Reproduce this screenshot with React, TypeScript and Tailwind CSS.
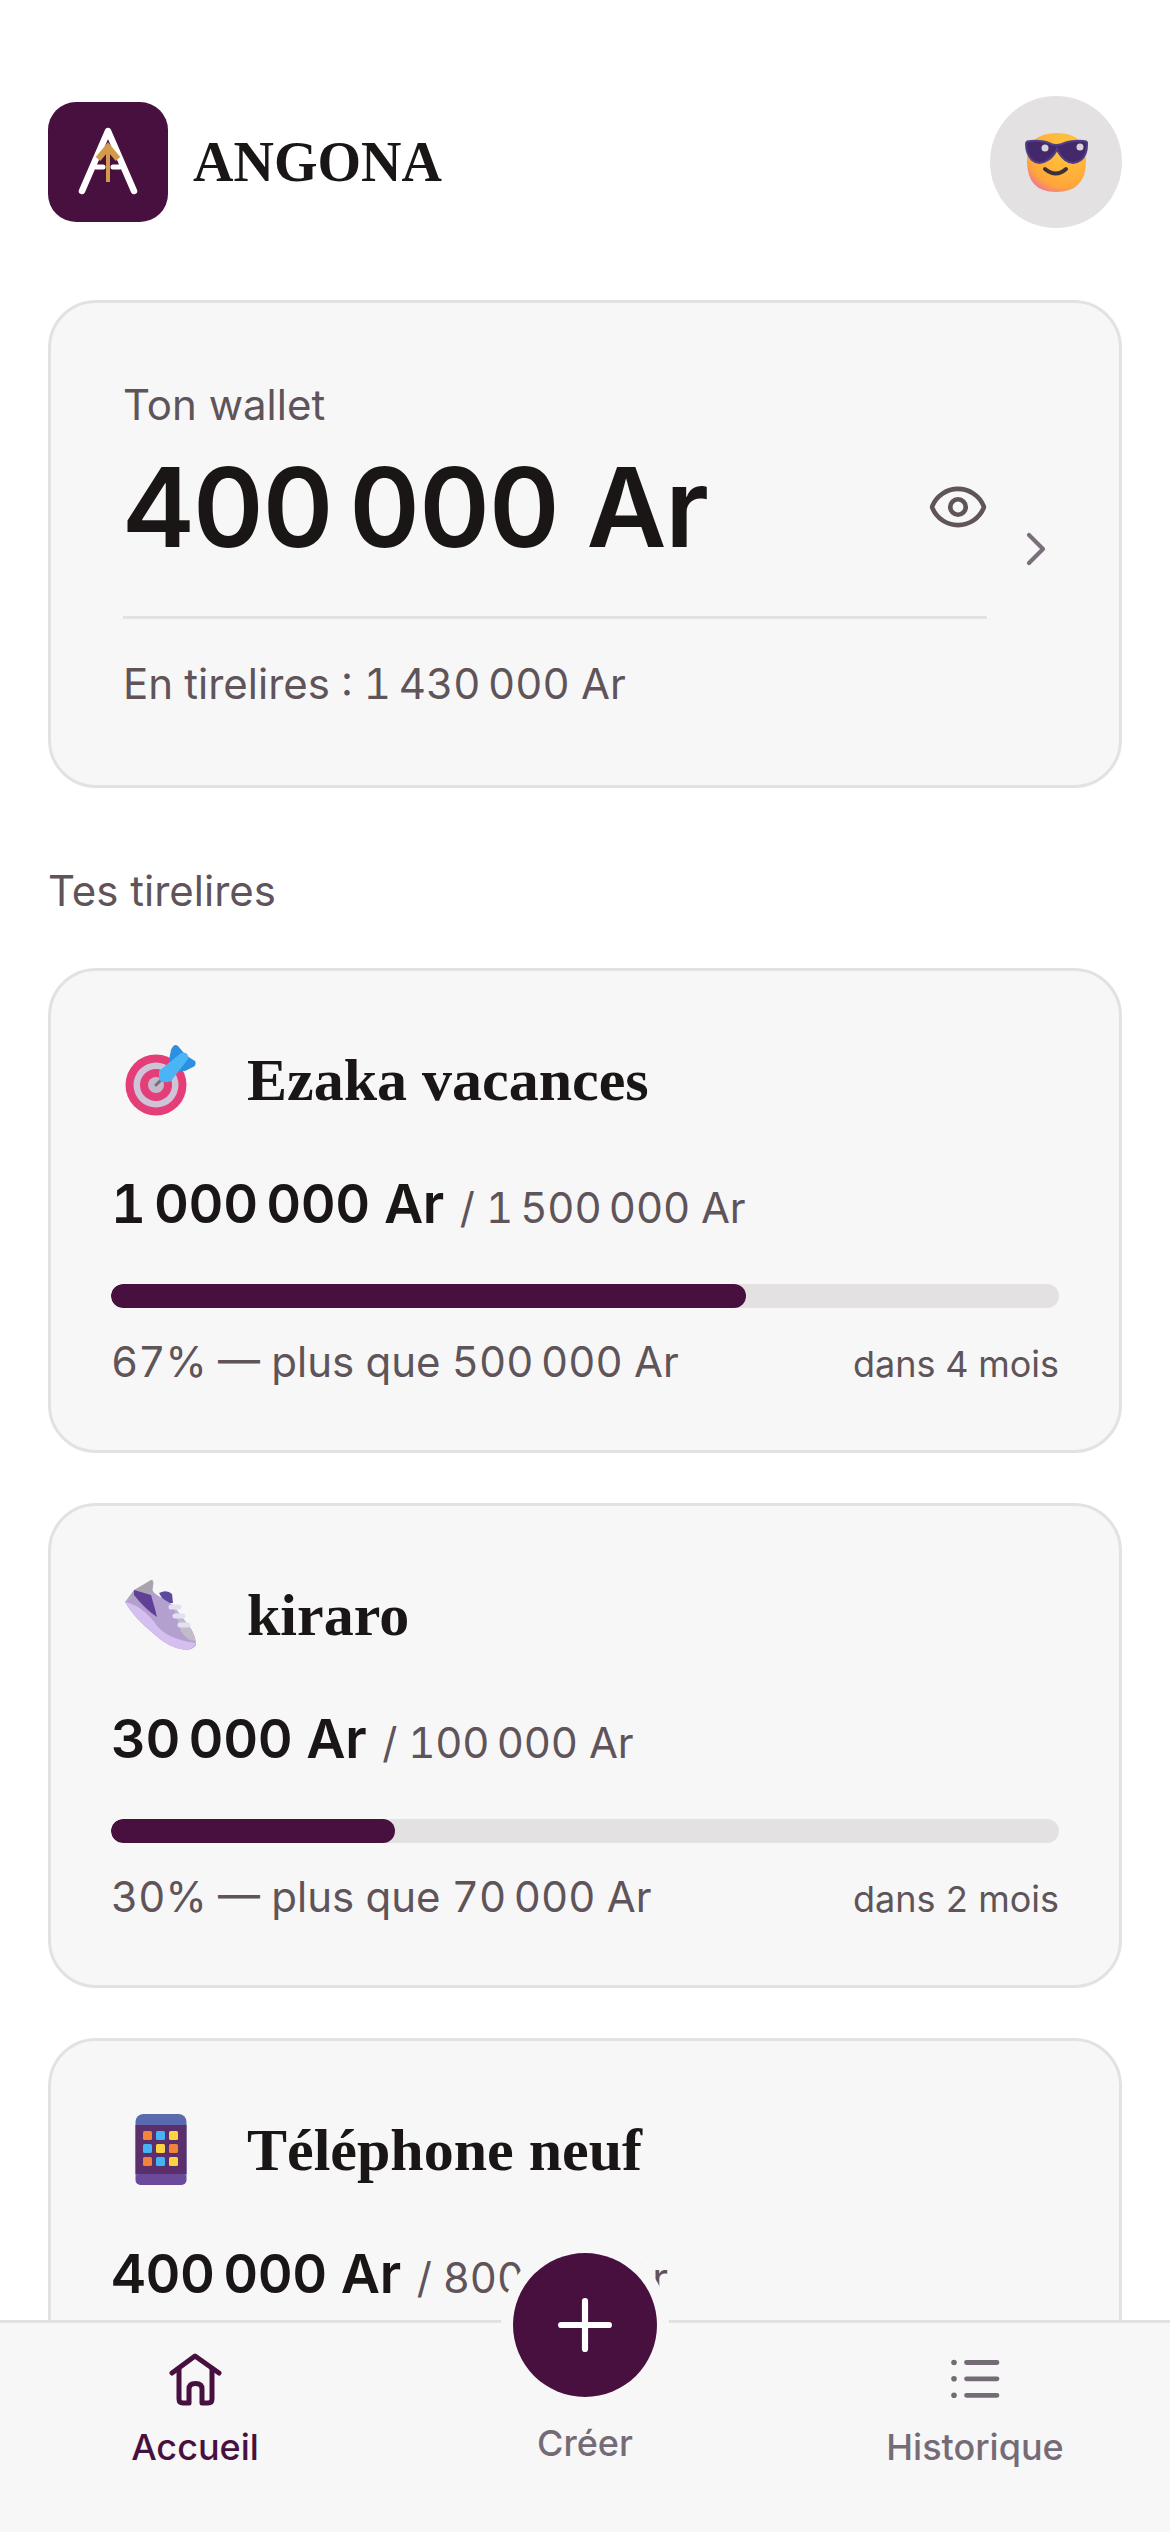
import { Plus, Eye, ChevronRight } from 'lucide-react';

const LogoMark = () => (
  <svg viewBox="0 0 120 120" className="w-[120px] h-[120px] shrink-0">
    <rect width="120" height="120" rx="28" fill="#48103f" />
    <path d="M34 89 L60 29 L86 89" fill="none" stroke="#fff" strokeWidth="6.5" strokeLinecap="round" strokeLinejoin="round" />
    <path d="M48 65 H55 M65 65 H72" stroke="#fff" strokeWidth="5" strokeLinecap="round" />
    <path d="M60 80 V46" stroke="#d39a4b" strokeWidth="4" />
    <path d="M50 57 L60 45 L70 57" fill="none" stroke="#d39a4b" strokeWidth="6" />
  </svg>
);

const CoolFace = () => (
  <svg viewBox="0 0 63 59" className="w-[63px] h-[59px]">
    <defs>
      <radialGradient id="face" cx="0.65" cy="0.25" r="0.85">
        <stop offset="0" stopColor="#ffc83d" />
        <stop offset="0.78" stopColor="#ffa63a" />
        <stop offset="1" stopColor="#ec6fa0" />
      </radialGradient>
    </defs>
    <path d="M2 28 Q2 0 32 0 Q61 0 61 28 Q61 59 31 59 Q2 59 2 28Z" fill="url(#face)" />
    <path d="M1 11 Q1 8 5 8 Q18 7 26 11 Q31 13 37 11 Q46 7 59 8 Q63 8 62 12 Q62 22 56 27 Q48 33 40 27 Q34 22 32 16 Q29 23 23 27 Q14 33 7 27 Q1 21 1 11Z" fill="#43296b" stroke="#4f3f85" strokeWidth="2" />
    <circle cx="20" cy="15" r="3.5" fill="#d8d2d8" />
    <circle cx="55" cy="14" r="3.5" fill="#d8d2d8" />
    <path d="M20 36 Q31 45 41 36" fill="none" stroke="#3a3238" strokeWidth="4" strokeLinecap="round" />
  </svg>
);

const TargetIcon = () => (
  <svg viewBox="0 0 72 72" className="w-[72px] h-[72px]">
    <circle cx="31" cy="41" r="30.5" fill="#e33e78" />
    <circle cx="31" cy="41" r="22.5" fill="#cfc3d8" />
    <circle cx="31" cy="41" r="16" fill="#e33e78" />
    <circle cx="31" cy="41" r="8" fill="#c4b8cc" />
    <path d="M44 16 L46 6 Q49 -1 53 2 L58 8 L62 12 L70 17 Q72 21 68 23 L60 27 L52 27Z" fill="#2c8fe0" />
    <path d="M31 41 L40 32" stroke="#77707a" strokeWidth="3" strokeLinecap="round" />
    <path d="M34 27 L56 9 Q61 8 62 10 Q64 12 63 15 L46 37 Q42 39 38 38 Q34 37 34 34Z" fill="#4ab4f5" />
  </svg>
);

const ShoeIcon = () => (
  <svg viewBox="0 0 72 72" className="w-[72px] h-[72px]">
    <path d="M34 14 Q42 10 47 15 L48 24 L40 24Z" fill="#5b4aa0" />
    <path d="M0 23 L26 1 Q29 0 28 7 Q26 13 32 16 L48 26 L66 50 Q71 58 71 66 Q68 71 60 71 Q44 69 30 56 Q8 38 0 23Z" fill="#b3a0cf" />
    <path d="M48 26 L66 50 Q70 56 70 62 Q62 62 56 52Z" fill="#c2bcc8" />
    <path d="M0 23 L9 11 L26 1 Q29 0 28 7 L26 14 Q14 12 6 18Z" fill="#a8a3ad" />
    <path d="M9 11 L26 16 L30 30 L32 38 Q20 30 9 16Z" fill="#5f4096" />
    <path d="M0 23 Q16 26 30 44 Q40 60 71 64 Q68 71 60 71 Q44 69 30 56 Q8 38 0 23Z" fill="#d4bff0" />
    <path d="M46 28 H54 M50 37 H58 M55 46 H63" stroke="#e4e0f4" strokeWidth="5" strokeLinecap="round" />
  </svg>
);

const PhoneIcon = () => (
  <svg viewBox="0 0 72 72" className="w-[72px] h-[72px]">
    <rect x="10.5" y="0" width="51" height="71" rx="8" fill="#5a6aae" />
    <rect x="10.5" y="60" width="51" height="11" rx="5" fill="#6b4a9c" />
    <rect x="10.5" y="11" width="51" height="49" fill="#5a2f6b" />
    {[17, 30, 43].map((y, r) => (
      [18, 31, 44].map((x, c) => {
        const colors = [
          ['#f0843a', '#45b4f5', '#fdd33f'],
          ['#45b4f5', '#fdd33f', '#f0843a'],
          ['#f0843a', '#45b4f5', '#fdd33f'],
        ];
        return <rect key={`${r}-${c}`} x={x} y={y} width="9" height="9" rx="1.5" fill={colors[r][c]} />;
      })
    ))}
  </svg>
);

const HomeIcon = () => (
  <svg viewBox="0 0 90 80" className="w-[90px] h-[80px]" fill="none" stroke="currentColor" strokeWidth="5" strokeLinecap="round" strokeLinejoin="round">
    <path d="M22 33 L45 16 L69 33" />
    <path d="M29 29 V59 Q29 63 33 63 H39 V49 Q39 43.500 45.500 43.500 Q52 43.500 52 49 V63 H58 Q62 63 62 59 V29" />
  </svg>
);

const HistoryIcon = () => (
  <svg viewBox="0 0 90 80" className="w-[90px] h-[80px]" fill="currentColor">
    <circle cx="24" cy="22.500" r="2.800" />
    <circle cx="24" cy="38.800" r="2.800" />
    <circle cx="24" cy="55.300" r="2.800" />
    <path d="M36.500 22.500 H67 M36.500 38.800 H67 M36.500 55.300 H67" stroke="currentColor" strokeWidth="4.800" strokeLinecap="round" />
  </svg>
);

interface GoalCardProps {
  icon: React.ReactNode;
  title: string;
  saved: string;
  target: string;
  percent: number;
  left?: string; // the third card's footer sits below the nav
  months?: string;
}

const GoalCard = ({ icon, title, saved, target, percent, left, months }: GoalCardProps) => (
  <div className="bg-[#f7f7f7] border-[3px] border-[#e4e1e3] rounded-[48px] h-[485px] px-[60px] pt-[61px] shrink-0">
    <div className="flex items-center gap-[36px] h-[96px]">
      <div className="w-[100px] flex justify-center">{icon}</div>
      <h3 className="font-['Liberation_Serif',serif] font-bold text-[60px] leading-none text-[#1a1616]">{title}</h3>
    </div>
    <p className="mt-[41px] h-[70px] flex items-baseline text-[#1a1616] font-semibold text-[54px] tracking-[-0.4px] leading-[70px] tabular-nums">
      {saved}
      <span className="ml-4 font-normal text-[42px] tracking-[-0.2px] text-[#5f5459]">/ {target}</span>
    </p>
    <div className="mt-[45px] h-6 rounded-xl bg-[#e4e1e3] overflow-hidden">
      <div className="h-full rounded-xl bg-[#48103f]" style={{ width: `${percent}%` }} />
    </div>
    {left && (
      <div className="mt-[26px] flex items-baseline justify-between text-[#5f5459] tabular-nums">
        <span className="text-[42px] leading-[56px]">{left}</span>
        <span className="text-[36px] leading-[56px]">{months}</span>
      </div>
    )}
  </div>
);

export default function App() {
  return (
    <div className="relative flex flex-col h-[2532px] w-[1170px] overflow-hidden bg-white font-['Inter',sans-serif]">
      <main className="flex-1 min-h-0 overflow-hidden px-[48px] pt-[96px]">
        <header className="flex items-center justify-between h-[132px]">
          <div className="flex items-center gap-[25px]">
            <LogoMark />
            <span className="font-['Liberation_Serif',serif] font-bold text-[56px] leading-none text-[#1a1616]">ANGONA</span>
          </div>
          <div className="w-[132px] h-[132px] rounded-full bg-[#e4e1e3] flex items-center justify-center">
            <CoolFace />
          </div>
        </header>

        {/* Wallet */}
        <section className="mt-[72px] h-[488px] bg-[#f7f7f7] border-[3px] border-[#e4e1e3] rounded-[48px] pl-[72px] pt-[78px] flex items-start">
          <div className="w-[864px] shrink-0">
            <p className="text-[42px] leading-[48px] text-[#5f5459]">Ton wallet</p>
            <div className="flex items-center justify-between mt-[12px]">
              <p className="text-[110px] leading-[132px] font-semibold tracking-[-1.4px] text-[#1a1616] tabular-nums">400&#8239;000 Ar</p>
              <Eye size={62} strokeWidth={1.8} className="text-[#5f5459] mr-[-2px]" />
            </div>
            <div className="mt-[43px] h-[3px] bg-[#e4e1e3]" />
            <p className="mt-[39px] text-[42px] leading-[52px] text-[#5f5459] tabular-nums">En tirelires : 1&#8239;430&#8239;000 Ar</p>
          </div>
          <ChevronRight size={56} strokeWidth={1.8} className="ml-[21px] mt-[140px] text-[#7a6f78]" />
        </section>

        <h2 className="mt-[79px] text-[42px] leading-[48px] text-[#5f5459]">Tes tirelires</h2>

        <div className="mt-[53px] flex flex-col gap-[50px]">
          <GoalCard icon={<TargetIcon />} title="Ezaka vacances" saved={'1\u202f000\u202f000 Ar'} target={'1\u202f500\u202f000 Ar'} percent={67} left={'67% — plus que 500\u202f000 Ar'} months="dans 4 mois" />
          <GoalCard icon={<ShoeIcon />} title="kiraro" saved={'30\u202f000 Ar'} target={'100\u202f000 Ar'} percent={30} left={'30% — plus que 70\u202f000 Ar'} months="dans 2 mois" />
          <GoalCard icon={<PhoneIcon />} title="Téléphone neuf" saved={'400\u202f000 Ar'} target={'800\u202f000 Ar'} percent={50} />
        </div>
      </main>

      {/* Bottom nav */}
      <nav className="h-[212px] shrink-0 bg-[#f7f7f7] border-t-[3px] border-[#e4e1e3] grid grid-cols-3">
        <div className="flex flex-col items-center pt-[17px] text-[#48103f]">
          <HomeIcon />
          <span className="mt-[5px] text-[36px] leading-[44px] font-medium">Accueil</span>
        </div>
        <div className="flex flex-col items-center pt-[98px] text-[#756b77]">
          <span className="text-[36px] leading-[44px] font-medium">Créer</span>
        </div>
        <div className="flex flex-col items-center pt-[17px] text-[#756b77]">
          <HistoryIcon />
          <span className="mt-[5px] text-[36px] leading-[44px] font-medium">Historique</span>
        </div>
      </nav>
      <button className="absolute left-[513px] top-[2253px] w-[144px] h-[144px] rounded-full bg-[#48103f] text-white flex items-center justify-center shadow-[0_0_0_12px_#f7f7f7]">
        <Plus size={82} strokeWidth={1.8} />
      </button>
    </div>
  );
}
